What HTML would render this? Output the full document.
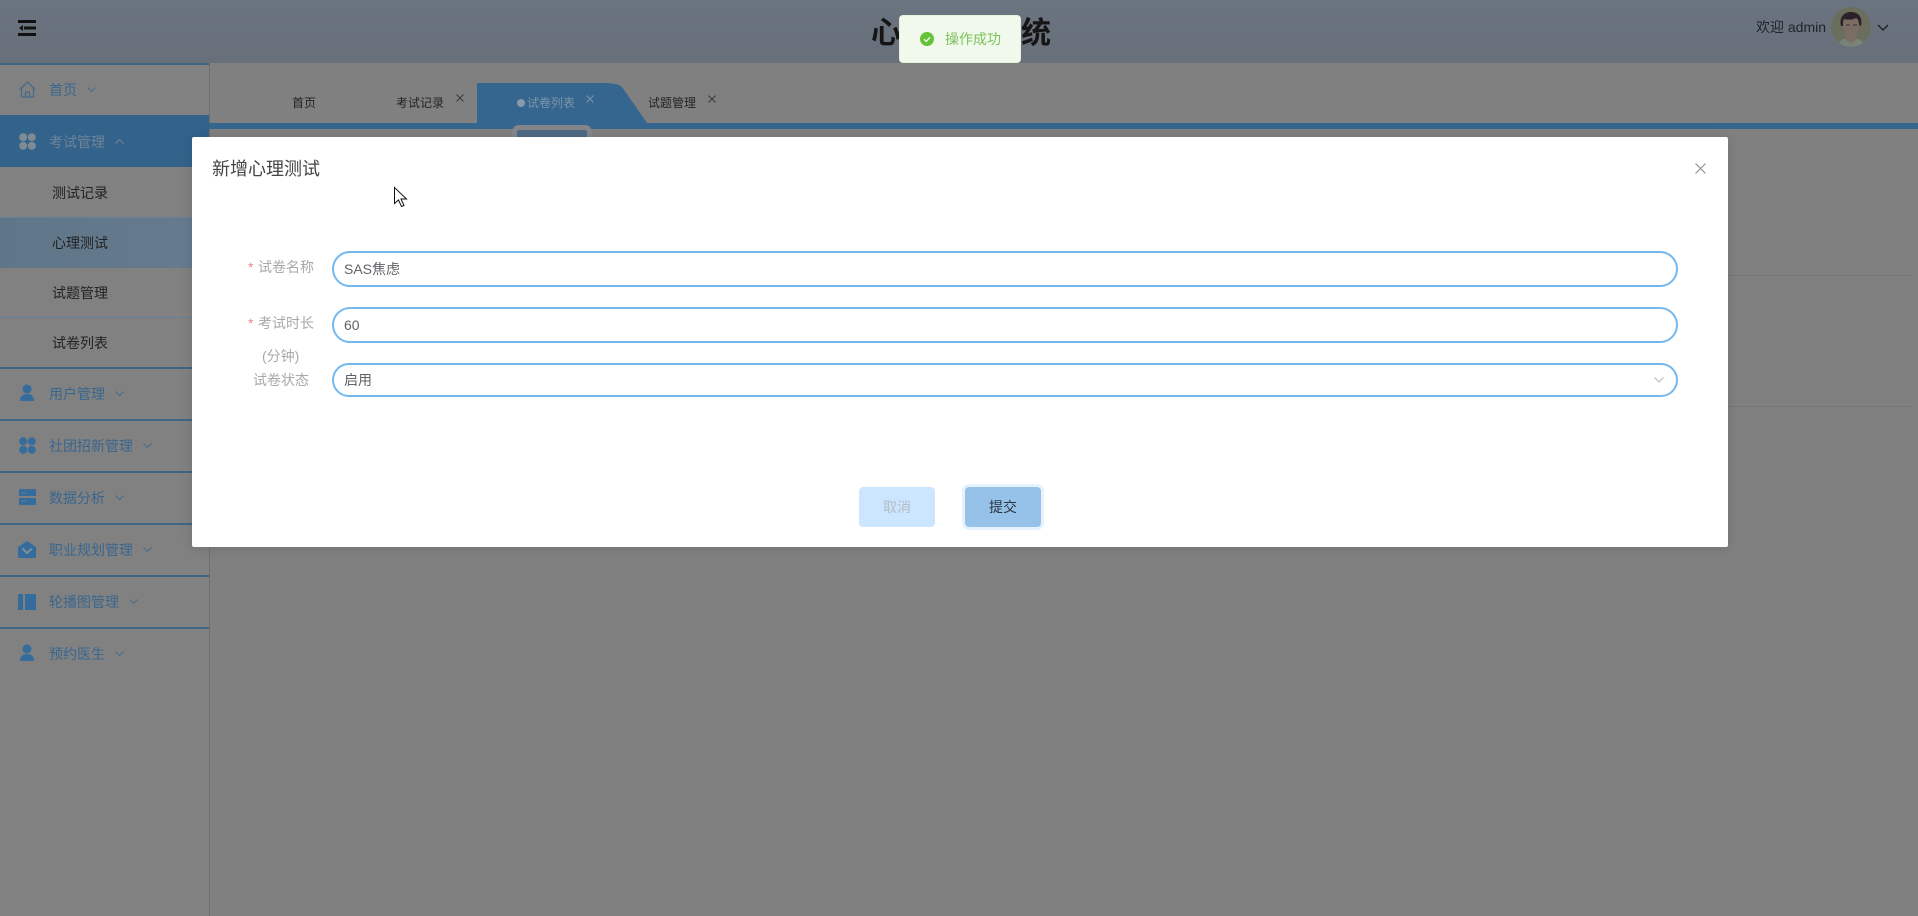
<!DOCTYPE html>
<html lang="zh"><head><meta charset="utf-8"><title>心理咨询系统</title>
<style>
html,body{margin:0;padding:0;width:1918px;height:916px;overflow:hidden;background:#808080}
body{position:relative;font-family:"Liberation Sans","Noto Sans CJK SC",sans-serif;font-size:14px}
.a{position:absolute;white-space:nowrap}
.t{position:absolute;white-space:nowrap;line-height:20px;height:20px}
svg{position:absolute;overflow:visible}
.line{position:absolute;left:0;width:209px;height:2px;background:#3f6584}
.m{color:#3a668e}
.s{color:#222;left:52px}
.i{position:absolute;left:332px;width:1346px;box-sizing:border-box;border:2px solid #74b8ee;border-radius:19px;background:#fff}
.lab{color:#a9a9a9}
.star{color:#e58a8a;font-size:14px}
.x{fill:none;stroke:#3a3a3a;stroke-width:1}
</style></head><body>
<!-- header -->
<div class="a" style="left:0;top:0;width:1918px;height:63px;background:linear-gradient(180deg,#6a7480,#676f79)"></div>
<svg style="left:18px;top:20px" width="18" height="16" viewBox="0 0 18 16"><path d="M0 0h18v3H0zM0 13h18v3H0zM6 6.500h12v3H6z" fill="#111"/><path d="M1 8l4-3v6z" fill="#111"/></svg>
<div class="t" style="left:871px;top:14px;font-size:30px;line-height:40px;height:40px;font-weight:700;color:#151515;width:180px">心理咨询系统</div>
<div class="t" style="left:1756px;top:17px;color:#1f242a">欢迎 admin</div>
<svg style="left:1831px;top:7px" width="40" height="40" viewBox="0 0 40 40"><defs><clipPath id="c"><circle cx="20" cy="20" r="20"/></clipPath></defs><g clip-path="url(#c)"><rect width="40" height="40" fill="#6b6d5d"/><path d="M6 40c1-7 8-9 14-9s13 2 14 9z" fill="#79837a"/><path d="M17 31l3 5 3-5z" fill="#47704f"/><path d="M15 27h10v6l-5 3-5-3z" fill="#7a6e66"/><ellipse cx="20" cy="18" rx="8.500" ry="11" fill="#7b6c64"/><path d="M10 19c-2-9 3-14 10-14s12 5 10 14l-2-1c0-4-1-6-3-7-3 2-9 2-12 1-1 1-1 4-1 7z" fill="#2c2129"/><path d="M15 18h4M22 18h4" stroke="#3c3036" stroke-width="1"/></g></svg>
<svg style="left:1877px;top:24px" width="12" height="7" viewBox="0 0 12 7"><path d="M1 1l5 5 5-5" fill="none" stroke="#1e2329" stroke-width="1.400"/></svg>

<!-- sidebar -->
<div class="a" style="left:0;top:63px;width:209px;height:853px;background:#818181;border-right:1px solid #6f6f6f;box-sizing:content-box"></div>
<div class="line" style="top:63px"></div>
<svg style="left:19px;top:81px" width="17" height="17" viewBox="0 0 17 17"><path d="M1 8L8.500 1 16 8M2.500 7v9h12V7M6.500 16v-5h4v5" fill="none" stroke="#456a8c" stroke-width="1.200"/></svg>
<div class="t m" style="left:49px;top:80px">首页</div>
<svg style="left:87px;top:87px" width="9" height="5" viewBox="0 0 9 5"><path d="M.5.5l4 4 4-4" fill="none" stroke="#4c6a86"/></svg>

<div class="a" style="left:0;top:115px;width:209px;height:52px;background:#33628b"></div>
<svg style="left:19px;top:133px" width="17" height="17" viewBox="0 0 17 17"><g fill="#7e8b95"><circle cx="4.200" cy="4.200" r="4"/><circle cx="12.800" cy="4.200" r="4"/><circle cx="4.200" cy="12.800" r="4"/><circle cx="12.800" cy="12.800" r="4"/></g></svg>
<div class="t" style="left:49px;top:132px;color:#6f8496">考试管理</div>
<svg style="left:115px;top:139px" width="9" height="5" viewBox="0 0 9 5"><path d="M.5 4.500l4-4 4 4" fill="none" stroke="#6f8496"/></svg>

<div class="a" style="left:0;top:218px;width:209px;height:50px;background:linear-gradient(90deg,#5f7689,#667b8d)"></div>
<div class="a" style="left:0;top:217px;width:209px;height:1px;background:#64809a"></div>
<div class="a" style="left:0;top:317px;width:209px;height:1px;background:#64809a"></div>
<div class="t s" style="top:183px">测试记录</div>
<div class="t s" style="top:233px">心理测试</div>
<div class="t s" style="top:283px">试题管理</div>
<div class="t s" style="top:333px">试卷列表</div>

<div class="line" style="top:367px"></div>
<svg style="left:20px;top:384px" width="14" height="18" viewBox="0 0 14 18"><circle cx="7" cy="5" r="4.500" fill="#356c9c"/><path d="M0 17c0-5 3-7 7-7s7 2 7 7z" fill="#356c9c"/></svg>
<div class="t m" style="left:49px;top:384px">用户管理</div>
<svg style="left:115px;top:391px" width="9" height="5" viewBox="0 0 9 5"><path d="M.5.5l4 4 4-4" fill="none" stroke="#4c6a86"/></svg>

<div class="line" style="top:419px"></div>
<svg style="left:19px;top:437px" width="17" height="17" viewBox="0 0 17 17"><g fill="#356c9c"><circle cx="4.200" cy="4.200" r="4"/><circle cx="12.800" cy="4.200" r="4"/><circle cx="4.200" cy="12.800" r="4"/><circle cx="12.800" cy="12.800" r="4"/></g></svg>
<div class="t m" style="left:49px;top:436px">社团招新管理</div>
<svg style="left:143px;top:443px" width="9" height="5" viewBox="0 0 9 5"><path d="M.5.5l4 4 4-4" fill="none" stroke="#4c6a86"/></svg>

<div class="line" style="top:471px"></div>
<svg style="left:19px;top:489px" width="17" height="16" viewBox="0 0 17 16"><path d="M0 1a1 1 0 011-1h15a1 1 0 011 1v6H0zM0 9h17v6a1 1 0 01-1 1H1a1 1 0 01-1-1z" fill="#356c9c"/><path d="M2 4h5M2 12h5" stroke="#7f8a99" stroke-width="1" opacity=".6"/></svg>
<div class="t m" style="left:49px;top:488px">数据分析</div>
<svg style="left:115px;top:495px" width="9" height="5" viewBox="0 0 9 5"><path d="M.5.5l4 4 4-4" fill="none" stroke="#4c6a86"/></svg>

<div class="line" style="top:523px"></div>
<svg style="left:18px;top:541px" width="18" height="17" viewBox="0 0 18 17"><path d="M9 0l9 6v11H0V6z" fill="#356c9c"/><path d="M4.500 7.500L9 12l5-4.500" fill="none" stroke="#818f9a" stroke-width="2"/></svg>
<div class="t m" style="left:49px;top:540px">职业规划管理</div>
<svg style="left:143px;top:547px" width="9" height="5" viewBox="0 0 9 5"><path d="M.5.5l4 4 4-4" fill="none" stroke="#4c6a86"/></svg>

<div class="line" style="top:575px"></div>
<svg style="left:18px;top:594px" width="18" height="16" viewBox="0 0 18 16"><path d="M0 0h5v16H0zM7 0h11v16H7z" fill="#356c9c"/></svg>
<div class="t m" style="left:49px;top:592px">轮播图管理</div>
<svg style="left:129px;top:599px" width="9" height="5" viewBox="0 0 9 5"><path d="M.5.5l4 4 4-4" fill="none" stroke="#4c6a86"/></svg>

<div class="line" style="top:627px"></div>
<svg style="left:20px;top:644px" width="14" height="18" viewBox="0 0 14 18"><circle cx="7" cy="5" r="4.500" fill="#356c9c"/><path d="M0 17c0-5 3-7 7-7s7 2 7 7z" fill="#356c9c"/></svg>
<div class="t m" style="left:49px;top:644px">预约医生</div>
<svg style="left:115px;top:651px" width="9" height="5" viewBox="0 0 9 5"><path d="M.5.5l4 4 4-4" fill="none" stroke="#4c6a86"/></svg>

<!-- tabs -->
<div class="a" style="left:209px;top:123px;width:1709px;height:6px;background:#34668f"></div>
<svg style="left:477px;top:83px" width="175" height="46" viewBox="0 0 175 46"><path d="M0 0H126C134 0 142 1 145 4L170 40H0z" fill="#34668f"/></svg>
<div class="a" style="left:512px;top:125px;width:80px;height:12px;background:#4f6a84;border:5px solid #858689;border-bottom:none;border-radius:7px 7px 0 0;box-sizing:border-box"></div>
<div class="t" style="left:292px;top:93px;font-size:12px;color:#232323">首页</div>
<div class="t" style="left:396px;top:93px;font-size:12px;color:#232323">考试记录</div>
<svg style="left:456px;top:94px" width="8" height="8" viewBox="0 0 8 8"><path class="x" d="M.5.5l7 7M7.500.5l-7 7"/></svg>
<div class="a" style="left:517px;top:99px;width:8px;height:8px;border-radius:50%;background:#8a9aa8"></div>
<div class="t" style="left:527px;top:93px;font-size:12px;color:#7f94a6">试卷列表</div>
<svg style="left:586px;top:95px" width="8" height="8" viewBox="0 0 8 8"><path d="M.5.5l7 7M7.500.5l-7 7" fill="none" stroke="#7f94a6"/></svg>
<div class="t" style="left:648px;top:93px;font-size:12px;color:#232323">试题管理</div>
<svg style="left:708px;top:95px" width="8" height="8" viewBox="0 0 8 8"><path class="x" d="M.5.5l7 7M7.500.5l-7 7"/></svg>

<!-- table lines -->
<div class="a" style="left:1728px;top:275px;width:184px;height:1px;background:#767676"></div>
<div class="a" style="left:1728px;top:406px;width:184px;height:1px;background:#767676"></div>

<!-- dialog -->
<div class="a" style="left:192px;top:137px;width:1536px;height:410px;background:#fff;border-radius:2px;box-shadow:0 1px 12px rgba(0,0,0,.12)"></div>
<div class="t" style="left:212px;top:157px;font-size:18px;line-height:24px;height:24px;color:#444">新增心理测试</div>
<svg style="left:1695px;top:163px" width="11" height="11" viewBox="0 0 11 11"><path d="M.5.5l10 10M10.500.5l-10 10" fill="none" stroke="#8a8d94" stroke-width="1.100"/></svg>
<svg style="left:394px;top:187px" width="13" height="20" viewBox="0 0 13 20"><path d="M.5.500v16l4-3.500 3 6.500 2.500-1-3-6.500h5.500z" fill="#fff" stroke="#111" stroke-width="1"/></svg>

<div class="t star" style="left:248px;top:257px">*</div>
<div class="t lab" style="left:258px;top:257px">试卷名称</div>
<div class="i" style="top:251px;height:36px"></div>
<div class="t" style="left:344px;top:259px;color:#606266">SAS焦虑</div>

<div class="t star" style="left:248px;top:313px">*</div>
<div class="t lab" style="left:258px;top:313px">考试时长</div>
<div class="i" style="top:307px;height:36px"></div>
<div class="t" style="left:344px;top:315px;color:#606266">60</div>
<div class="t lab" style="left:262px;top:346px">(分钟)</div>

<div class="t lab" style="left:253px;top:370px">试卷状态</div>
<div class="i" style="top:363px;height:34px"></div>
<div class="t" style="left:344px;top:370px;color:#606266">启用</div>
<svg style="left:1654px;top:377px" width="10" height="6" viewBox="0 0 10 6"><path d="M.5.500L5 5 9.500.5" fill="none" stroke="#b4b8c0" stroke-width="1.100"/></svg>

<div class="a" style="left:859px;top:487px;width:76px;height:40px;border-radius:4px;background:#cde6ff;color:#b4bcc6;line-height:40px;text-align:center">取消</div>
<div class="a" style="left:965px;top:487px;width:76px;height:40px;border-radius:4px;background:#96c2ea;color:#2a3542;line-height:40px;text-align:center;box-shadow:0 0 0 3px #e6f3ff">提交</div>

<!-- toast -->
<div class="a" style="left:899px;top:15px;width:122px;height:48px;background:#f0f9eb;border:1px solid #e4f2dc;border-radius:4px;box-sizing:border-box"></div>
<svg style="left:920px;top:32px" width="14" height="14" viewBox="0 0 14 14"><circle cx="7" cy="7" r="7" fill="#67c23a"/><path d="M4 7.200l2.200 2.200L10 5.300" fill="none" stroke="#f0f9eb" stroke-width="1.300"/></svg>
<div class="t" style="left:945px;top:29px;color:#7cc35a">操作成功</div>
</body></html>
